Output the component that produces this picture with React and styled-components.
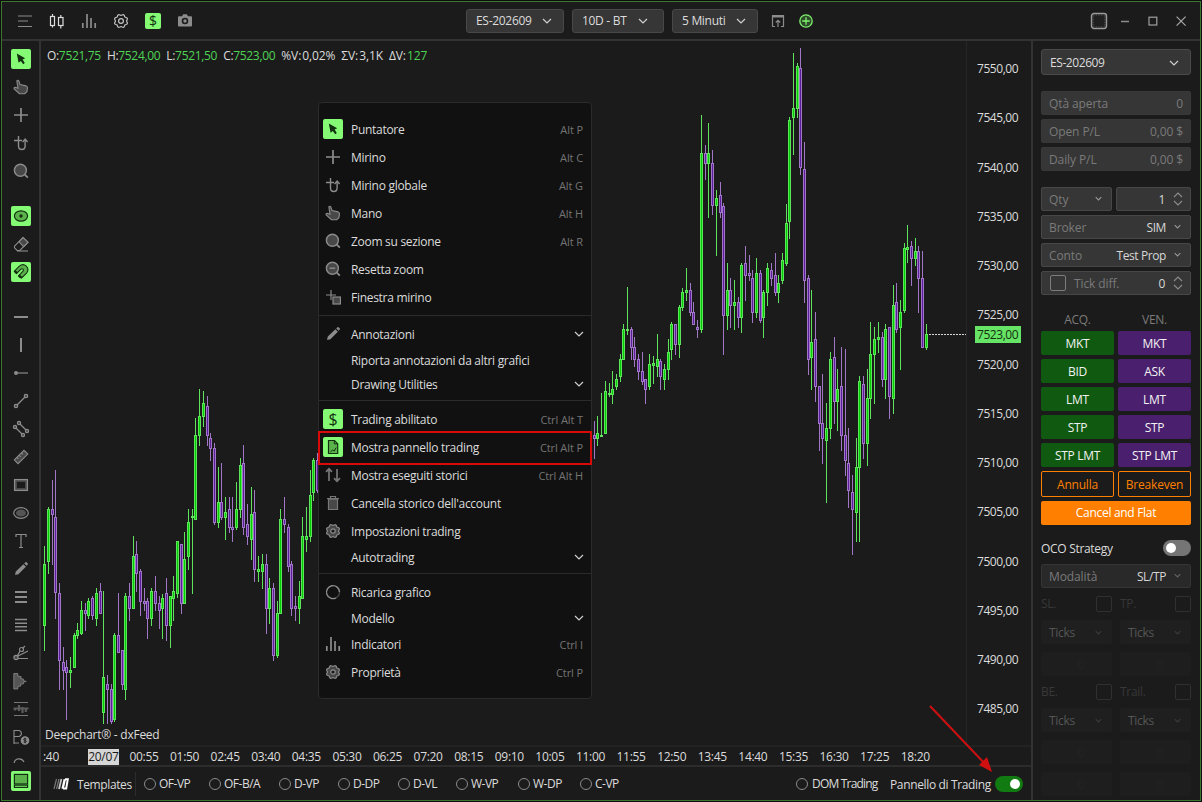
import React from "react";
import styled, { createGlobalStyle } from "styled-components";

// candles: [x, up, high, bodyTop, bodyBottom, low]
const CANDLES = [
  [44, 1, 546, 564, 626, 651], [48, 1, 507, 509, 562, 574], [52, 0, 480, 509, 515, 565],
  [55, 0, 470, 517, 593, 619], [59, 0, 583, 593, 661, 690], [63, 0, 647, 662, 671, 690],
  [66, 0, 660, 667, 673, 720], [70, 1, 657, 670, 673, 688], [74, 1, 633, 635, 668, 668],
  [77, 1, 623, 630, 636, 639], [81, 1, 601, 610, 634, 635], [85, 0, 603, 610, 614, 631],
  [88, 1, 598, 601, 616, 619], [92, 0, 596, 598, 616, 620], [96, 1, 588, 593, 619, 626],
  [100, 0, 583, 591, 614, 614], [103, 1, 591, 677, 713, 724], [107, 0, 675, 684, 690, 724],
  [111, 0, 684, 689, 722, 724], [114, 1, 633, 635, 720, 722], [118, 0, 593, 635, 653, 653],
  [122, 0, 650, 650, 685, 690], [125, 1, 593, 596, 690, 700], [129, 0, 583, 596, 609, 621],
  [133, 1, 536, 556, 609, 609], [136, 0, 541, 554, 574, 592], [140, 0, 569, 571, 602, 616],
  [144, 0, 588, 601, 604, 611], [147, 0, 598, 601, 619, 639], [151, 1, 588, 591, 619, 626],
  [155, 0, 576, 591, 604, 611], [159, 0, 596, 603, 611, 629], [162, 1, 594, 598, 609, 639],
  [166, 0, 578, 593, 626, 641], [170, 1, 596, 596, 626, 648], [173, 1, 576, 591, 599, 621],
  [177, 1, 541, 541, 594, 598], [181, 0, 544, 544, 604, 614], [184, 1, 532, 559, 604, 604],
  [188, 1, 509, 522, 557, 570], [192, 1, 509, 516, 518, 594], [195, 1, 418, 435, 520, 520],
  [199, 1, 389, 416, 436, 446], [203, 1, 391, 403, 417, 427], [207, 0, 396, 406, 436, 446],
  [210, 0, 433, 438, 449, 461], [214, 0, 443, 448, 523, 525], [218, 1, 467, 502, 523, 528],
  [221, 0, 463, 502, 518, 520], [225, 1, 497, 512, 518, 540], [229, 0, 497, 509, 528, 533],
  [232, 0, 497, 527, 530, 542], [236, 1, 482, 509, 528, 530], [240, 1, 458, 465, 510, 518],
  [243, 0, 445, 463, 528, 535], [247, 0, 504, 524, 537, 545], [251, 1, 487, 514, 540, 560],
  [254, 0, 490, 512, 570, 582], [258, 1, 556, 569, 572, 582], [262, 1, 554, 564, 572, 589],
  [266, 0, 554, 564, 609, 634], [269, 1, 578, 588, 609, 624], [273, 0, 583, 588, 656, 661],
  [277, 1, 601, 613, 656, 658], [280, 1, 509, 519, 614, 614], [284, 0, 497, 519, 525, 533],
  [288, 0, 524, 527, 567, 572], [291, 0, 561, 564, 609, 616], [295, 0, 596, 606, 609, 621],
  [299, 1, 581, 596, 609, 624], [302, 1, 517, 536, 599, 599], [306, 1, 507, 536, 540, 552],
  [310, 1, 470, 495, 537, 542], [313, 1, 458, 460, 493, 501], [317, 0, 453, 460, 491, 493],
  [594, 0, 421, 435, 439, 459], [597, 1, 416, 433, 439, 446], [601, 1, 393, 435, 437, 437],
  [605, 1, 381, 391, 434, 434], [609, 1, 383, 393, 395, 397], [612, 1, 371, 389, 395, 404],
  [616, 1, 374, 379, 387, 390], [620, 1, 354, 359, 377, 382], [623, 1, 324, 329, 360, 360],
  [627, 1, 287, 329, 331, 335], [631, 0, 327, 329, 348, 360], [634, 0, 337, 347, 360, 367],
  [638, 0, 354, 359, 372, 380], [642, 0, 352, 371, 382, 385], [645, 0, 379, 379, 390, 404],
  [649, 1, 354, 364, 387, 390], [653, 1, 356, 363, 366, 384], [657, 1, 334, 359, 367, 377],
  [660, 0, 359, 361, 377, 390], [664, 1, 364, 369, 380, 390], [668, 1, 339, 352, 370, 380],
  [671, 1, 322, 324, 350, 360], [675, 0, 324, 324, 345, 355], [679, 1, 305, 307, 345, 358],
  [682, 1, 288, 292, 308, 311], [686, 1, 268, 290, 293, 301], [690, 0, 283, 290, 313, 316],
  [693, 0, 302, 312, 325, 325], [697, 0, 320, 327, 330, 338], [701, 1, 115, 153, 330, 333],
  [705, 0, 145, 153, 164, 180], [708, 1, 123, 153, 164, 218], [712, 0, 150, 163, 206, 215],
  [716, 1, 190, 198, 206, 256], [720, 0, 182, 195, 213, 218], [723, 0, 203, 206, 316, 355],
  [727, 1, 263, 290, 316, 330], [730, 0, 278, 290, 306, 328], [734, 1, 280, 302, 306, 330],
  [738, 0, 297, 302, 318, 328], [741, 1, 263, 265, 318, 333], [745, 0, 246, 263, 276, 301],
  [749, 0, 255, 273, 276, 281], [752, 0, 270, 278, 313, 323], [756, 1, 258, 273, 313, 318],
  [760, 0, 270, 273, 321, 323], [763, 1, 290, 292, 318, 338], [767, 1, 263, 268, 293, 306],
  [771, 0, 263, 270, 279, 286], [775, 0, 253, 275, 293, 296], [778, 1, 275, 283, 293, 303],
  [782, 1, 253, 260, 281, 284], [786, 1, 204, 223, 264, 266], [789, 1, 117, 120, 222, 239],
  [793, 1, 53, 108, 118, 155], [797, 1, 63, 66, 109, 118], [800, 0, 48, 68, 168, 175],
  [804, 0, 142, 169, 281, 303], [808, 0, 275, 278, 360, 375], [811, 1, 290, 342, 358, 390],
  [815, 0, 312, 339, 387, 402], [819, 0, 386, 386, 424, 451], [822, 0, 374, 423, 439, 464],
  [826, 1, 403, 428, 441, 503], [830, 1, 352, 359, 429, 439], [834, 0, 337, 357, 402, 424],
  [837, 1, 369, 389, 402, 431], [841, 0, 347, 386, 436, 451], [845, 0, 349, 435, 461, 476],
  [848, 0, 428, 463, 491, 508], [852, 0, 475, 492, 510, 555], [856, 1, 438, 467, 513, 542],
  [859, 1, 376, 381, 468, 542], [863, 0, 376, 384, 444, 459], [867, 1, 369, 398, 444, 466],
  [870, 1, 322, 354, 399, 419], [874, 1, 327, 339, 355, 404], [878, 1, 322, 337, 340, 353],
  [882, 0, 332, 337, 380, 387], [885, 1, 324, 329, 380, 399], [889, 0, 327, 327, 397, 419],
  [893, 1, 285, 305, 399, 414], [896, 0, 283, 302, 330, 333], [900, 1, 300, 312, 328, 370],
  [904, 1, 243, 248, 311, 313], [907, 1, 225, 247, 250, 263], [911, 0, 241, 246, 259, 286],
  [915, 1, 238, 251, 259, 266], [918, 0, 246, 251, 279, 313], [922, 0, 251, 278, 348, 348],
  [926, 1, 324, 334, 348, 350],
];

const PRICES = [7550, 7545, 7540, 7535, 7530, 7525, 7520, 7515, 7510, 7505, 7500, 7495, 7490, 7485];
const TIMES = [
  "00:55", "01:50", "02:45", "03:40", "04:35", "05:30", "06:25", "07:20", "08:15", "09:10",
  "10:05", "11:00", "11:55", "12:50", "13:45", "14:40", "15:35", "16:30", "17:25", "18:20",
];

// wavy outline of the settings wheel
const gearPath = () => {
  let d = "";
  for (let i = 0; i < 72; i++) {
    const a = (i / 72) * Math.PI * 2;
    const r = 6.2 + 0.6 * Math.cos(8 * a + Math.PI);
    d += `${i ? "L" : "M"}${(10 + r * Math.sin(a)).toFixed(2)} ${(10 - r * Math.cos(a)).toFixed(2)}`;
  }
  return d + "Z";
};
const GEAR = gearPath();

const G = "#8c8c8c";
const F = "#484848";
const D = "#12300f";

const SHAPES = {
  list: <path d="M3 5h14M3 10h10M3 15.5h14" stroke={G} />,
  candles: (
    <g stroke="#dcdcdc" strokeWidth="1.2">
      <rect x="3.5" y="5.5" width="4" height="9" />
      <rect x="11.5" y="6.5" width="4.5" height="8" />
      <path d="M5.5 3v2.5M5.5 14.5v2M13.8 4v2.5M13.8 14.5v3" />
    </g>
  ),
  bars: <path d="M3.8 12v5M8 3v14M12 7v10M16.2 12v5" stroke={G} strokeWidth="1.7" />,
  gear: (
    <g stroke="#c4c4c4" strokeWidth="1.2">
      <path d={GEAR} />
      <circle cx="10" cy="10" r="2.4" />
    </g>
  ),
  gearFill: (
    <g stroke={G} strokeWidth="1.2">
      <path d={GEAR} fill={F} />
      <circle cx="10" cy="10" r="2.2" fill="#161616" />
    </g>
  ),
  camera: (
    <g>
      <path d="M3 6.2q0-1 1-1h3l1.2-2h3.6l1.2 2h3q1 0 1 1v8.3q0 1-1 1H4q-1 0-1-1z" fill={G} />
      <circle cx="10" cy="10" r="2.5" stroke="#1b1b1b" strokeWidth="1.6" />
    </g>
  ),
  pointer: <path d="M5.8 4.4L14.2 9.3 11.6 10.6 13.8 14 12.2 15.2 9.8 11.9 7.6 13.8Z" fill={D} />,
  hand: (
    <path
      d="M5.8 3.8q1.4-1.2 2 .2l1.3 3.6 6 1.3q1.6.5 1.4 2l-.6 3.8-2.2 2H8.4L3.2 12q-.6-1.6 1-1.8l2.8 1z"
      fill={F} stroke={G} strokeWidth="1.1"
    />
  ),
  cross: <path d="M3 10h14M10 3v14" stroke={G} strokeWidth="1.7" />,
  crossGlobal: (
    <g stroke={G} strokeWidth="1.4">
      <path d="M3 7.5h8M7.5 3v10q0 3.5 3.3 3.5t3.3-3.5V6.5" />
      <path d="M11.6 9l2.5-3 2.5 3" />
    </g>
  ),
  zoom: (
    <g stroke={G} strokeWidth="1.4">
      <circle cx="9.4" cy="9.2" r="6" fill={F} />
      <path d="M13.8 13.6l3 3" strokeWidth="1.8" />
    </g>
  ),
  zoomOut: (
    <g stroke={G} strokeWidth="1.4">
      <circle cx="9.4" cy="9.2" r="6" fill={F} />
      <path d="M13.8 13.6l3 3" strokeWidth="1.8" />
      <path d="M6.6 9.2h5.6" />
    </g>
  ),
  crossWindow: (
    <g stroke={G} strokeWidth="1.2">
      <path d="M3 8h10M8 3v10" />
      <rect x="10" y="10" width="7.4" height="7" fill={F} />
    </g>
  ),
  eye: (
    <g stroke={D} strokeWidth="1.2">
      <ellipse cx="10" cy="10" rx="6.6" ry="5.2" fill="#5bb24b" />
      <circle cx="10" cy="10" r="1.7" fill={D} stroke="none" />
    </g>
  ),
  eraser: (
    <g stroke={G} strokeWidth="1.1">
      <path d="M3.5 12.2L12 3.6l5 4.6-8.2 8.3H6.2L3.5 13.8z" />
      <path d="M8 7.8L12 3.6l5 4.6-4.3 4.4z" fill={F} />
      <path d="M6 17h11" />
    </g>
  ),
  magnet: (
    <g>
      <path d="M3.4 9.2L8.4 4.2q3.4-3 6.9-.1 3.2 3.4.2 7L10.6 16 7.7 13.6 12 9.2q1-1.2 0-2.1-1-.8-2 .1L5.6 11.5z" fill="#5bb24b" stroke={D} strokeWidth="1.1" />
      <path d="M2.8 9.8l1.7-1.6 2.5 2.2-1.7 1.8zM6.9 14.3l1.6-1.7 2.6 2.1-1.8 1.9z" fill={D} />
    </g>
  ),
  hline: <path d="M3 10h14" stroke={G} strokeWidth="2" />,
  vline: <path d="M10 3v14" stroke={G} strokeWidth="2" />,
  ray: (
    <g>
      <path d="M5 10h12" stroke="#5c5c5c" strokeWidth="2" />
      <circle cx="5" cy="10" r="2" fill={G} />
    </g>
  ),
  trend: (
    <g stroke={G} strokeWidth="1.2">
      <path d="M6 14l8-8" />
      <circle cx="5" cy="15" r="1.7" fill={F} />
      <circle cx="15" cy="5" r="1.7" fill={F} />
    </g>
  ),
  channel: (
    <g stroke={G} strokeWidth="1.2">
      <path d="M4 8l8 8M8 4l8 8" />
      <circle cx="4" cy="8" r="1.6" fill={F} />
      <circle cx="12" cy="16" r="1.6" fill={F} />
      <circle cx="8" cy="4" r="1.6" fill={F} />
      <circle cx="16" cy="12" r="1.6" fill={F} />
    </g>
  ),
  ruler: (
    <g stroke={G} strokeWidth="1.1">
      <path d="M3.3 12.8L13 3.3l3.8 3.8L7 16.7z" fill={F} />
      <path d="M6 10.5l1.3 1.3M8.2 8.3l1.6 1.6M10.5 6l1.3 1.3" />
    </g>
  ),
  rect: (
    <g>
      <rect x="3.6" y="4.6" width="12.8" height="10.8" stroke={G} strokeWidth="1.3" fill={F} />
      <rect x="6" y="7" width="8" height="6" fill="#1b1b1b" />
    </g>
  ),
  ellipse: (
    <g>
      <ellipse cx="10" cy="10" rx="7.3" ry="5.4" stroke={G} strokeWidth="1.2" />
      <ellipse cx="10" cy="10" rx="5" ry="3.6" fill="#555" />
    </g>
  ),
  text: <path d="M5 6V3.5h10V6M10 3.5v13M8 16.5h4" stroke={G} strokeWidth="1.2" />,
  pencil: <path d="M4 16l.8-3.4 7.6-7.4 2.5 2.5L7.4 15.2zM13.2 4.4l1.2-1.1q.8-.5 1.5.2l.8.8q.5.7-.1 1.4l-1 1z" fill={G} />,
  lines3: <path d="M4 5h12M4 10h12M4 15h12" stroke={G} strokeWidth="2" />,
  lines4: <path d="M4 4.5h12M4 8.2h12M4 11.8h12M4 15.5h12" stroke={G} strokeWidth="1.4" />,
  fork: (
    <g stroke={G} strokeWidth="1.2">
      <path d="M6 13.5l3-5.5M11.5 5.5L14 3M7 13l10-5M7 15.5h10" />
      <circle cx="10.5" cy="6.5" r="2" />
      <circle cx="5" cy="14.5" r="2.1" fill={F} />
    </g>
  ),
  profile: <path d="M2.8 2.5h4v2.6l3.4.6-.6 1.8 2.8.6v1.6l2.8.7-2.8.8v1.6l-2.8.4.2 1.8-3 .6v2.4h-4z" fill="#555" stroke={G} strokeWidth=".8" />,
  range: (
    <g stroke="#777" strokeWidth="1">
      <path d="M3 3.5h14M3 16.5h14" />
      <path d="M2.5 9.5h15M4 8.5v3M8 6v6M11.5 8v6M14.8 9v4" strokeWidth="2.2" stroke="#5c5c5c" />
    </g>
  ),
  dollarLevel: (
    <g stroke={G} strokeWidth="1.1">
      <path d="M3 3v14M3 3.5h5q2.4.6 2.4 3T8 9.5H3M3 16h5" />
      <circle cx="14" cy="13.5" r="3.8" fill={G} />
      <path d="M15.4 12q-2.8-1-2.8.5 0 .8 1.4 1t1.4 1q0 1.5-2.8.5M14 10.8v5.4" stroke="#1b1b1b" strokeWidth=".9" />
    </g>
  ),
  arc: <path d="M3 8.5q.6-4.2 4.4-4.6T13 7" stroke={G} strokeWidth="1.2" />,
  screen: (
    <g stroke={D} strokeWidth="1.2">
      <rect x="3.4" y="3.4" width="13.2" height="9.6" fill="#5bb24b" />
      <path d="M3.4 14.2h13.2v2.2H3.4z" />
    </g>
  ),
  doc: (
    <g stroke={D} strokeWidth="1.2">
      <path d="M5.5 3.5h6l3.2 3.2v9.8H5.5z" fill="#5bb24b" />
      <path d="M11.3 3.5v3.4h3.4M7.5 14.8l2-1.6 1.8.8 1.8-3.4" strokeWidth="1" />
    </g>
  ),
  updown: (
    <g stroke="#777" strokeWidth="1.7">
      <path d="M6 16V4M3 6.8l3-3 3 3M14 4v12M11 13.2l3 3 3-3" />
    </g>
  ),
  trash: (
    <g stroke="#777" strokeWidth="1.2">
      <path d="M5.5 6v10.5h9V6z" fill={F} />
      <path d="M4 5.6h12M7.5 5V3.5h5V5" />
    </g>
  ),
  reload: (
    <g strokeWidth="1.4">
      <path d="M13 15.9A6.5 6.5 0 1 1 16.5 10" stroke={G} />
      <path d="M16.5 10A6.5 6.5 0 0 1 13 15.9" stroke="#444" />
    </g>
  ),
  popout: (
    <g stroke={G} strokeWidth="1.2">
      <path d="M7 15.5H4.5v-11h11v11H13" />
      <path d="M4.5 5.5h11" strokeWidth="2" />
      <path d="M10 16V9.5M7.8 11.5L10 9.3l2.2 2.2" />
    </g>
  ),
  plusCircle: (
    <g stroke="#7ff06f" strokeWidth="1.3">
      <circle cx="10" cy="10" r="6.2" fill="#2c4a28" />
      <path d="M10 6.2v7.6M6.2 10h7.6" />
    </g>
  ),
  frame: (
    <g>
      <rect x="3.2" y="3.2" width="13.6" height="13.6" rx="2.2" stroke="#9a9a9a" strokeWidth="1.3" fill="#202020" />
      <rect x="4.6" y="4.6" width="10.8" height="10.8" stroke="#5a5a5a" strokeDasharray="1.2 1.2" />
    </g>
  ),
  minimize: <path d="M6 10.5h8" stroke={G} strokeWidth="1.5" />,
  maximize: <rect x="6" y="6.2" width="7.8" height="7.8" stroke="#a0a0a0" strokeWidth="1.2" />,
  close: <path d="M5.6 5.6l9 9M14.6 5.6l-9 9" stroke="#a8a8a8" strokeWidth="1.2" />,
};

const Icon = ({ name, size = 20 }) => (
  <svg width={size} height={size} viewBox="0 0 20 20" fill="none">
    {SHAPES[name]}
  </svg>
);

const Chevron = ({ size = 10, color = "#d0d0d0" }) => (
  <svg width={size} height={size} viewBox="0 0 10 10" fill="none">
    <path d="M1 3l4 4 4-4" stroke={color} strokeWidth={size < 9 ? 1.5 : 1.2} />
  </svg>
);

const Spinner = ({ color = "#8c8c8c" }) => (
  <svg width="10" height="14" viewBox="0 0 10 14" fill="none">
    <path d="M1 5l4-4 4 4M1 9l4 4 4-4" stroke={color} strokeWidth="1.1" />
  </svg>
);

const TOOLS = [
  ["pointer", "hand", "cross", "crossGlobal", "zoom"],
  ["eye", "eraser", "magnet"],
  [
    "hline", "vline", "ray", "trend", "channel", "ruler", "rect", "ellipse", "text",
    "pencil", "lines3", "lines4", "fork", "profile", "range", "dollarLevel", "arc",
  ],
];
const ACTIVE_TOOLS = ["pointer", "eye", "magnet"];

const MENU = [
  [
    { icon: "pointer", label: "Puntatore", keys: "Alt P", active: true },
    { icon: "cross", label: "Mirino", keys: "Alt C" },
    { icon: "crossGlobal", label: "Mirino globale", keys: "Alt G" },
    { icon: "hand", label: "Mano", keys: "Alt H" },
    { icon: "zoom", label: "Zoom su sezione", keys: "Alt R" },
    { icon: "zoomOut", label: "Resetta zoom" },
    { icon: "crossWindow", label: "Finestra mirino" },
  ],
  [
    { icon: "pencil", label: "Annotazioni", sub: true },
    { label: "Riporta annotazioni da altri grafici" },
    { label: "Drawing Utilities", sub: true },
  ],
  [
    { icon: "dollar", label: "Trading abilitato", keys: "Ctrl Alt T", active: true },
    { icon: "doc", label: "Mostra pannello trading", keys: "Ctrl Alt P", active: true, marked: true },
    { icon: "updown", label: "Mostra eseguiti storici", keys: "Ctrl Alt H" },
    { icon: "trash", label: "Cancella storico dell'account" },
    { icon: "gearFill", label: "Impostazioni trading" },
    { label: "Autotrading", sub: true },
  ],
  [
    { icon: "reload", label: "Ricarica grafico" },
    { label: "Modello", sub: true },
    { icon: "bars", label: "Indicatori", keys: "Ctrl I" },
    { icon: "gearFill", label: "Proprietà", keys: "Ctrl P" },
  ],
];

const TEMPLATES = [
  ["OF-VP", 65], ["OF-B/A", 70], ["D-VP", 59], ["D-DP", 60],
  ["D-VL", 58], ["W-VP", 62], ["W-DP", 62], ["C-VP", 60],
];

const ORDERS = [["MKT", "MKT"], ["BID", "ASK"], ["LMT", "LMT"], ["STP", "STP"], ["STP LMT", "STP LMT"]];

const Candles = () => (
  <Plot viewBox="41 41 925 704" shapeRendering="crispEdges">
    {CANDLES.map(([x, up, high, top, bottom, low]) => (
      <g key={x}>
        <rect x={x} y={high} width="1" height={low - high} fill={up ? "#5fe35c" : "#a276c6"} />
        <rect x={x - 1} y={top} width="3" height={bottom - top} fill={up ? "#5fe35c" : "#a276c6"} />
        {bottom - top > 2 && (
          <rect x={x} y={top + 1} width="1" height={bottom - top - 2} fill={up ? "#00d000" : "#5a1e9c"} />
        )}
      </g>
    ))}
    <path d="M929 334.5h37" stroke="#d8d8d8" strokeDasharray="2 1" />
  </Plot>
);

const ContextMenu = () => (
  <Menu>
    {MENU.map((group, i) => (
      <React.Fragment key={i}>
        {i > 0 && <MenuSeparator />}
        {group.map((item) => (
          <MenuRow key={item.label} $tall={!!item.icon}>
            <IconBox $active={item.active}>
              {item.icon === "dollar" ? <Dollar>$</Dollar> : item.icon && <Icon name={item.icon} />}
            </IconBox>
            <MenuLabel>{item.label}</MenuLabel>
            {item.keys && <Keys>{item.keys}</Keys>}
            {item.sub && <Chevron />}
            {item.marked && <Mark />}
          </MenuRow>
        ))}
      </React.Fragment>
    ))}
  </Menu>
);

const OcoBlock = ({ left, right, rows }) => (
  <OcoGrid>
    {[left, right].map((name) => (
      <OcoColumn key={name}>
        <OcoHead>
          {name}
          <Check $size={16} $dim />
        </OcoHead>
        <Ghost>
          Ticks
          <Chevron size={7} color="#3c3c3c" />
        </Ghost>
        {Array.from({ length: rows }, (_, i) => (
          <Ghost key={i} $faint>
            0
            <Spinner color="#aaa" />
          </Ghost>
        ))}
      </OcoColumn>
    ))}
  </OcoGrid>
);

const TradingPanel = () => (
  <Panel>
    <Instrument>
      ES-202609
      <Chevron />
    </Instrument>
    <Stack $top={16}>
      <Field><Muted>Qtà aperta</Muted><Muted>0</Muted></Field>
      <Field><Muted>Open P/L</Muted><Muted>0,00 $</Muted></Field>
      <Field><Muted>Daily P/L</Muted><Muted>0,00 $</Muted></Field>
    </Stack>
    <Stack $top={16}>
      <Pair>
        <Field $line $width={71}><Muted>Qty</Muted><SmallChevron><Chevron size={7} color="#999" /></SmallChevron></Field>
        <Field $line $width={75}><Value>1</Value><Spinner /></Field>
      </Pair>
      <Field $line><Muted>Broker</Muted><Value>SIM</Value><SmallChevron><Chevron size={7} color="#999" /></SmallChevron></Field>
      <Field $line><Muted>Conto</Muted><Value>Test Prop</Value><SmallChevron><Chevron size={7} color="#999" /></SmallChevron></Field>
      <Field $line><Check $size={16} /><Muted>Tick diff.</Muted><Value>0</Value><Spinner /></Field>
    </Stack>
    <OrderHead><span>ACQ.</span><span>VEN.</span></OrderHead>
    <Stack $top={0}>
      {ORDERS.map(([buy, sell]) => (
        <Pair key={buy}>
          <Order $color="#0f5a10">{buy}</Order>
          <Order $color="#4a1f6e">{sell}</Order>
        </Pair>
      ))}
      <Pair>
        <Outline>Annulla</Outline>
        <Outline>Breakeven</Outline>
      </Pair>
      <Flat>Cancel and Flat</Flat>
    </Stack>
    <OcoTitle>
      <span>OCO Strategy</span>
      <Toggle />
    </OcoTitle>
    <Field $line $dim><Muted>Modalità</Muted><Value>SL/TP</Value><SmallChevron><Chevron size={7} color="#666" /></SmallChevron></Field>
    <OcoBlock left="SL." right="TP." rows={1} />
    <OcoBlock left="BE." right="Trail." rows={2} />
  </Panel>
);

const App = () => {
  return (
    <>
      <GlobalStyle />
      <Window>
        <TopBar>
          <TopIcons>
            <Icon name="list" />
            <Icon name="candles" />
            <Icon name="bars" />
            <Icon name="gear" />
            <TopDollar>$</TopDollar>
            <Icon name="camera" />
          </TopIcons>
          <Selects>
            <Select $width={98}>ES-202609<Chevron /></Select>
            <Select $width={92} $end={15}>10D - BT<Chevron /></Select>
            <Select $width={86}>5 Minuti<Chevron /></Select>
            <SelectActions>
              <Icon name="popout" />
              <Icon name="plusCircle" />
            </SelectActions>
          </Selects>
          <WindowButtons>
            <Icon name="frame" size={22} />
            <Icon name="minimize" />
            <Icon name="maximize" />
            <Icon name="close" />
          </WindowButtons>
        </TopBar>
        <Main>
          <SideBar>
            <Tools>
              {TOOLS.map((group, i) => (
                <ToolGroup key={i}>
                  {group.map((name) => (
                    <Tool key={name}>
                      <IconBox $active={ACTIVE_TOOLS.includes(name)}>
                        <Icon name={name} />
                      </IconBox>
                    </Tool>
                  ))}
                </ToolGroup>
              ))}
            </Tools>
            <IconBox $active><Icon name="screen" /></IconBox>
          </SideBar>
          <Center>
            <ChartRow>
              <Chart>
                <Candles />
                <Ohlc>
                  <span>O:<Up>7521,75</Up></span>
                  <span>H:<Up>7524,00</Up></span>
                  <span>L:<Up>7521,50</Up></span>
                  <span>C:<Up>7523,00</Up></span>
                  <Volume>%V:<i>0,02%</i></Volume>
                  <Volume>ΣV:<i>3,1K</i></Volume>
                  <Volume>ΔV:<Up>127</Up></Volume>
                </Ohlc>
                <Feed>Deepchart® - dxFeed</Feed>
                <ContextMenu />
              </Chart>
              <PriceAxis>
                {PRICES.map((p) => (
                  <Price key={p}>{p},00</Price>
                ))}
                <LastPrice>7523,00</LastPrice>
              </PriceAxis>
            </ChartRow>
            <TimeAxis>
              <FirstTime>:40</FirstTime>
              <Time><DayTag>20/07</DayTag></Time>
              {TIMES.map((t) => (
                <Time key={t}>{t}</Time>
              ))}
            </TimeAxis>
            <BottomBar>
              <svg width="17" height="14" viewBox="0 0 17 14" fill="none">
                <path d="M3.5 2L1 12M6 2L3.5 12" stroke="#777" strokeWidth="1.2" />
                <path d="M8.4 2L6 12" stroke="#c8c8c8" strokeWidth="1.8" />
                <path d="M11.8 2.2L9.6 11.8" stroke="#fff" strokeWidth="2.4" />
                <path d="M12 2.2h2.8L13.2 11.5H10" stroke="#fff" strokeWidth="2" />
              </svg>
              <TemplatesLabel>Templates</TemplatesLabel>
              {TEMPLATES.map(([name, w]) => (
                <Radio key={name} $width={w}><Ring />{name}</Radio>
              ))}
              <BottomRight>
                <Radio $width={94} $tight><Ring />DOM Trading</Radio>
                <PanelLabel>Pannello di Trading</PanelLabel>
                <Toggle $on />
              </BottomRight>
            </BottomBar>
          </Center>
          <TradingPanel />
        </Main>
        <Arrow viewBox="0 0 70 72">
          <path d="M3 3L60 63" stroke="#d01010" strokeWidth="2" />
          <path d="M65 69L52 62L60 54Z" fill="#d01010" />
        </Arrow>
      </Window>
    </>
  );
};

const GlobalStyle = createGlobalStyle`
  * {
    box-sizing: border-box;
  }
  body {
    margin: 0;
    background: #0d0d0d;
    font-family: "Open Sans", "Noto Sans", sans-serif;
    font-size: 12px;
    letter-spacing: -0.3px;
    line-height: 16px;
    color: #dcdcdc;
    overflow: hidden;
  }
  svg {
    display: block;
    flex: none;
  }
`;

const Window = styled.div`
  position: relative;
  display: flex;
  flex-direction: column;
  width: 1200px;
  height: 800px;
  margin: 1px;
  border: 1px solid #3c7631;
  background: #1b1b1b;
`;
const TopBar = styled.div`
  display: flex;
  align-items: center;
  height: 39px;
  flex: none;
  border-bottom: 2px solid #333;
`;
const TopIcons = styled.div`
  display: flex;
  align-items: center;
  gap: 12px;
  width: 464px;
  padding-left: 13px;
`;
const Dollar = styled.span`
  color: #12300f;
  font-size: 16px;
  line-height: 20px;
  letter-spacing: 0;
`;
const TopDollar = styled(Dollar)`
  width: 16px;
  height: 16px;
  margin: 0 2px;
  border-radius: 2px;
  background: #85fb75;
  font-size: 14px;
  line-height: 16px;
  text-align: center;
`;
const Selects = styled.div`
  display: flex;
  align-items: center;
  gap: 8px;
`;
const Select = styled.div`
  display: flex;
  align-items: center;
  justify-content: space-between;
  width: ${(p) => p.$width}px;
  height: 24px;
  padding: 1px ${(p) => p.$end || 11}px 0 9px;
  border: 1px solid #484848;
  border-radius: 3px;
  background: #363636;
`;
const SelectActions = styled.div`
  display: flex;
  gap: 8px;
  margin-left: 2px;
`;
const WindowButtons = styled.div`
  display: flex;
  align-items: center;
  gap: 8px;
  margin-left: auto;
  padding-right: 9px;
  & > svg:first-child {
    margin-right: -3px;
  }
`;
const Main = styled.div`
  display: flex;
  flex: 1;
  min-height: 0;
`;
const SideBar = styled.div`
  display: flex;
  flex-direction: column;
  align-items: center;
  width: 39px;
  flex: none;
  border-right: 2px solid #333;
  padding: 4px 0 9px;
`;
const Tools = styled.div`
  flex: 1;
  min-height: 0;
  overflow: hidden;
  margin-bottom: 8px;
`;
const ToolGroup = styled.div`
  margin-bottom: 17px;
`;
const Tool = styled.div`
  height: 28px;
  display: flex;
  align-items: center;
`;
const IconBox = styled.div`
  display: flex;
  align-items: center;
  justify-content: center;
  width: 20px;
  height: 20px;
  flex: none;
  border-radius: 2px;
  background: ${(p) => (p.$active ? "#85fb75" : "transparent")};
`;
const Center = styled.div`
  display: flex;
  flex-direction: column;
  width: 990px;
  flex: none;
`;
const ChartRow = styled.div`
  display: flex;
  height: 704px;
`;
const Chart = styled.div`
  position: relative;
  width: 926px;
  border-right: 1px solid #262626;
`;
const Plot = styled.svg`
  width: 925px;
  height: 704px;
`;
const Ohlc = styled.div`
  position: absolute;
  left: 6px;
  top: 7px;
  display: flex;
  gap: 6px;
  letter-spacing: -0.32px;
  i {
    font-style: normal;
  }
`;
const Volume = styled.span`
  letter-spacing: -0.1px;
  i {
    margin-left: 1px;
  }
`;
const Up = styled.i`
  color: #4fd355;
`;
const Feed = styled.div`
  position: absolute;
  left: 4px;
  bottom: 2px;
  letter-spacing: -0.25px;
`;
const PriceAxis = styled.div`
  position: relative;
  flex: 1;
  padding-top: 3px;
  letter-spacing: -0.45px;
`;
const Price = styled.div`
  height: 49.27px;
  line-height: 50px;
  padding-left: 10px;
`;
const LastPrice = styled.div`
  position: absolute;
  left: 8px;
  top: 285px;
  width: 46px;
  height: 17px;
  padding: 1px 0 0 2px;
  background: #66e465;
  color: #14300f;
`;
const TimeAxis = styled.div`
  display: flex;
  align-items: center;
  height: 20px;
  padding-top: 2px;
  border-top: 2px solid #222;
  overflow: hidden;
`;
const FirstTime = styled.div`
  width: 42.1px;
  padding-left: 2px;
  flex: none;
`;
const Time = styled.div`
  width: 40.6px;
  flex: none;
  text-align: center;
`;
const DayTag = styled.span`
  display: inline-block;
  background: #d6d6d6;
  color: #1b1b1b;
`;
const BottomBar = styled.div`
  display: flex;
  align-items: center;
  flex: 1;
  padding-left: 12px;
  border-top: 2px solid #2c2c2c;
`;
const TemplatesLabel = styled.div`
  width: 66px;
  height: 24px;
  margin-right: 8px;
  padding: 5px 0 0 7px;
  border-right: 1px solid #2c2c2c;
  letter-spacing: -0.38px;
`;
const Radio = styled.div`
  display: flex;
  align-items: center;
  gap: ${(p) => (p.$tight ? 4 : 3)}px;
  width: ${(p) => p.$width}px;
  letter-spacing: ${(p) => (p.$tight ? -0.8 : -0.5)}px;
  white-space: nowrap;
`;
const Ring = styled.span`
  width: 12px;
  height: 12px;
  flex: none;
  border: 1px solid #8a8a8a;
  border-radius: 50%;
`;
const BottomRight = styled.div`
  display: flex;
  align-items: center;
  margin-left: auto;
  padding-right: 8px;
`;
const PanelLabel = styled.div`
  width: 105px;
  padding-top: 2px;
  letter-spacing: -0.36px;
  white-space: nowrap;
`;
const Toggle = styled.div`
  display: flex;
  align-items: center;
  justify-content: ${(p) => (p.$on ? "flex-end" : "flex-start")};
  width: 28px;
  height: 16px;
  padding: 0 3px;
  border-radius: 8px;
  background: ${(p) => (p.$on ? "#117a11" : "#757575")};
  &::after {
    content: "";
    width: 10px;
    height: 10px;
    border-radius: 50%;
    background: #fff;
  }
`;
const Menu = styled.div`
  position: absolute;
  left: 277px;
  top: 61px;
  width: 274px;
  height: 597px;
  padding: 12px 0;
  border: 1px solid #2b2b2b;
  border-radius: 4px;
  background: #111;
`;
const MenuRow = styled.div`
  position: relative;
  display: flex;
  align-items: center;
  height: ${(p) => (p.$tall ? 28 : 24)}px;
  padding: 0 8px 0 4px;
  & > svg {
    margin-right: -1px;
  }
`;
const MenuLabel = styled.div`
  flex: 1;
  padding: 2px 0 0 8px;
  letter-spacing: -0.29px;
  white-space: nowrap;
`;
const Keys = styled.div`
  padding-top: 2px;
  font-size: 11px;
  letter-spacing: -0.1px;
  color: #747474;
`;
const MenuSeparator = styled.div`
  height: 1px;
  margin: 4px 0;
  background: #2b2b2b;
`;
const Mark = styled.div`
  position: absolute;
  left: -1px;
  top: -2px;
  width: 274px;
  height: 34px;
  border: 2px solid #d80a0a;
`;
const Panel = styled.div`
  flex: 1;
  min-width: 0;
  padding: 8px 9px 0 8px;
  border-left: 2px solid #333;
  overflow: hidden;
`;
const Instrument = styled.div`
  display: flex;
  align-items: center;
  justify-content: space-between;
  height: 26px;
  padding: 1px 11px 0 8px;
  border: 1px solid #4a4a4a;
  border-radius: 3px;
  background: #363636;
  letter-spacing: -0.42px;
`;
const Stack = styled.div`
  display: flex;
  flex-direction: column;
  gap: 4px;
  margin-top: ${(p) => p.$top}px;
`;
const Pair = styled.div`
  display: flex;
  gap: 4px;
`;
const Field = styled.div`
  display: flex;
  align-items: center;
  height: 24px;
  width: ${(p) => (p.$width ? `${p.$width}px` : "auto")};
  padding: 0 7px;
  border: 1px solid ${(p) => (p.$dim ? "#353535" : p.$line ? "#474747" : "#383838")};
  border-radius: 2px;
  background: ${(p) => (p.$dim ? "#292929" : "#363636")};
  & > svg {
    margin-left: 8px;
  }
`;
const Muted = styled.span`
  padding-top: 2px;
  color: #7a7a7a;
  letter-spacing: -0.1px;
  & + & {
    margin-left: auto;
  }
`;
const Value = styled.span`
  margin-left: auto;
  padding-top: 2px;
  color: #d6d6d6;
  letter-spacing: -0.4px;
`;
const SmallChevron = styled.span`
  margin: 0 2px 2px 8px;
  ${Muted} + & {
    margin-left: auto;
  }
`;
const Check = styled.span`
  width: ${(p) => p.$size}px;
  height: ${(p) => p.$size}px;
  border: 1px solid ${(p) => (p.$dim ? "#303030" : "#7c7c7c")};
  border-radius: 2px;
  ${Field} > & {
    margin: 0 8px 0 1px;
  }
`;
const OrderHead = styled.div`
  display: flex;
  gap: 4px;
  height: 36px;
  padding-top: 17px;
  color: #7a7a7a;
  span {
    flex: 1;
    text-align: center;
  }
`;
const Order = styled.div`
  flex: 1;
  height: 24px;
  padding-top: 1px;
  border-radius: 2px;
  background: ${(p) => p.$color};
  color: #f2f2f2;
  line-height: 24px;
  text-align: center;
  font-weight: 500;
`;
const Outline = styled.div`
  flex: 1;
  height: 26px;
  border: 1px solid #ff8000;
  border-radius: 2px;
  color: #ff8000;
  line-height: 26px;
  text-align: center;
  letter-spacing: -0.2px;
`;
const Flat = styled.div`
  height: 24px;
  border-radius: 2px;
  background: #ff8000;
  color: #fff;
  line-height: 24px;
  text-align: center;
`;
const OcoTitle = styled.div`
  display: flex;
  align-items: center;
  justify-content: space-between;
  height: 16px;
  margin: 15px 0 8px;
  span {
    padding-top: 2px;
  }
`;
const OcoGrid = styled.div`
  display: grid;
  grid-template-columns: 71px 71px;
  gap: 8px;
  margin-top: 8px;
`;
const OcoColumn = styled.div`
  display: flex;
  flex-direction: column;
  gap: 8px;
`;
const OcoHead = styled.div`
  display: flex;
  align-items: center;
  justify-content: space-between;
  height: 16px;
  color: #383838;
`;
const Ghost = styled.div`
  display: flex;
  align-items: center;
  justify-content: ${(p) => (p.$faint ? "flex-end" : "space-between")};
  gap: 8px;
  height: 24px;
  padding: 1px 10px 0 8px;
  border-radius: 2px;
  background: ${(p) => (p.$faint ? "#777" : "#1f1f1f")};
  color: ${(p) => (p.$faint ? "#fff" : "#565656")};
  opacity: ${(p) => (p.$faint ? 0.03 : 1)};
`;
const Arrow = styled.svg`
  position: absolute;
  left: 925px;
  top: 701px;
  width: 70px;
  height: 72px;
  fill: none;
`;

export default App;
